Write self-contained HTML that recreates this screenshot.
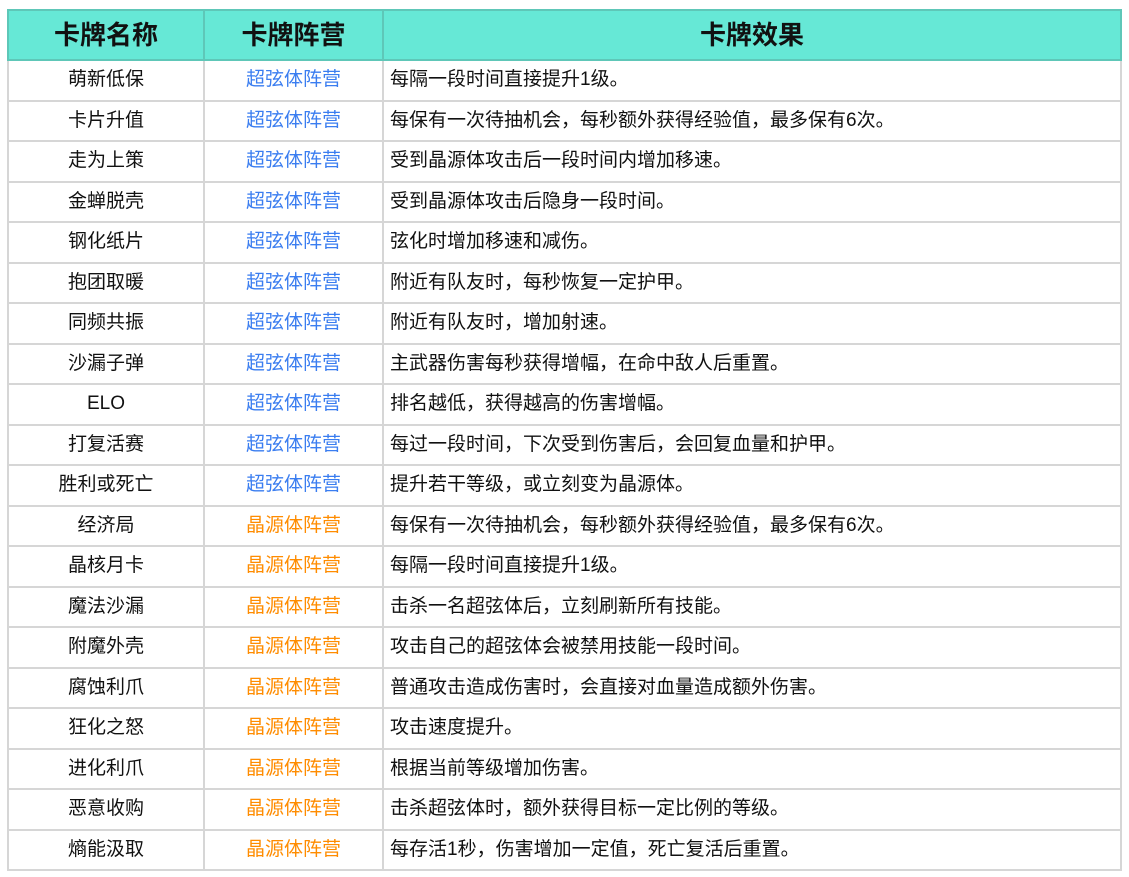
<!DOCTYPE html>
<html><head><meta charset="utf-8"><style>
body{margin:0;background:#fff;width:1129px;height:877px;overflow:hidden;font-family:"Liberation Sans","Noto Sans CJK SC",sans-serif;}
table{position:absolute;left:7px;top:9px;border-collapse:collapse;table-layout:fixed;width:1115px;}
td,th{border:2px solid #d6d6d6;padding:0;font-size:19px;color:#111;height:38.5px;line-height:20px;}
th{background:#66e8d6;height:48px;font-size:26px;font-weight:bold;border-color:#5ec7b8;color:#111;}
td:nth-child(1),td:nth-child(2){text-align:center;}
td:nth-child(3){padding-left:6px;}
.b{color:#3a7df0}.o{color:#ff8c00}
</style></head><body>
<table>
<colgroup><col style="width:196px"><col style="width:179px"><col></colgroup>
<tr><th>卡牌名称</th><th>卡牌阵营</th><th>卡牌效果</th></tr>
<tr><td>萌新低保</td><td class="b">超弦体阵营</td><td>每隔一段时间直接提升1级。</td></tr>
<tr><td>卡片升值</td><td class="b">超弦体阵营</td><td>每保有一次待抽机会，每秒额外获得经验值，最多保有6次。</td></tr>
<tr><td>走为上策</td><td class="b">超弦体阵营</td><td>受到晶源体攻击后一段时间内增加移速。</td></tr>
<tr><td>金蝉脱壳</td><td class="b">超弦体阵营</td><td>受到晶源体攻击后隐身一段时间。</td></tr>
<tr><td>钢化纸片</td><td class="b">超弦体阵营</td><td>弦化时增加移速和减伤。</td></tr>
<tr><td>抱团取暖</td><td class="b">超弦体阵营</td><td>附近有队友时，每秒恢复一定护甲。</td></tr>
<tr><td>同频共振</td><td class="b">超弦体阵营</td><td>附近有队友时，增加射速。</td></tr>
<tr><td>沙漏子弹</td><td class="b">超弦体阵营</td><td>主武器伤害每秒获得增幅，在命中敌人后重置。</td></tr>
<tr><td>ELO</td><td class="b">超弦体阵营</td><td>排名越低，获得越高的伤害增幅。</td></tr>
<tr><td>打复活赛</td><td class="b">超弦体阵营</td><td>每过一段时间，下次受到伤害后，会回复血量和护甲。</td></tr>
<tr><td>胜利或死亡</td><td class="b">超弦体阵营</td><td>提升若干等级，或立刻变为晶源体。</td></tr>
<tr><td>经济局</td><td class="o">晶源体阵营</td><td>每保有一次待抽机会，每秒额外获得经验值，最多保有6次。</td></tr>
<tr><td>晶核月卡</td><td class="o">晶源体阵营</td><td>每隔一段时间直接提升1级。</td></tr>
<tr><td>魔法沙漏</td><td class="o">晶源体阵营</td><td>击杀一名超弦体后，立刻刷新所有技能。</td></tr>
<tr><td>附魔外壳</td><td class="o">晶源体阵营</td><td>攻击自己的超弦体会被禁用技能一段时间。</td></tr>
<tr><td>腐蚀利爪</td><td class="o">晶源体阵营</td><td>普通攻击造成伤害时，会直接对血量造成额外伤害。</td></tr>
<tr><td>狂化之怒</td><td class="o">晶源体阵营</td><td>攻击速度提升。</td></tr>
<tr><td>进化利爪</td><td class="o">晶源体阵营</td><td>根据当前等级增加伤害。</td></tr>
<tr><td>恶意收购</td><td class="o">晶源体阵营</td><td>击杀超弦体时，额外获得目标一定比例的等级。</td></tr>
<tr><td>熵能汲取</td><td class="o">晶源体阵营</td><td>每存活1秒，伤害增加一定值，死亡复活后重置。</td></tr>
</table>
</body></html>
